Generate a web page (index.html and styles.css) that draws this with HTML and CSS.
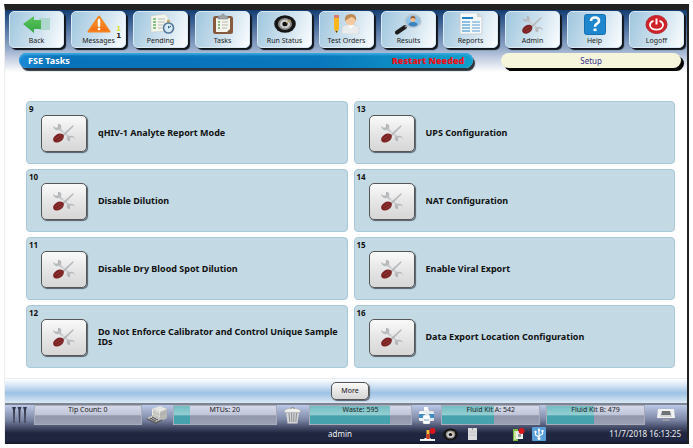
FILE: index.html
```html
<!DOCTYPE html>
<html lang="en">
<head>
<meta charset="utf-8">
<title>FSE Tasks</title>
<link rel="stylesheet" href="styles.css">
</head>
<body>
<svg class="defs" aria-hidden="true">
  <defs>
    <linearGradient id="orange" x1="0" y1="0" x2="0" y2="1"><stop offset="0" stop-color="#ffa640"/><stop offset="1" stop-color="#f26a10"/></linearGradient>
    <linearGradient id="green" x1="0" y1="0" x2="0" y2="1"><stop offset="0" stop-color="#5cc45a"/><stop offset="1" stop-color="#35a844"/></linearGradient>
    <linearGradient id="steel" x1="0" y1="0" x2="1" y2="1"><stop offset="0" stop-color="#a2a6aa"/><stop offset=".5" stop-color="#d0d2d4"/><stop offset="1" stop-color="#a4a8ac"/></linearGradient>
  </defs>
  <symbol id="tools" viewBox="0 0 24 20">
    <path d="M1 3l3 2 2-1V1c3 0 4 2 3 5l8 7c3-1 5 0 6 3l-3-2-2 1v3c-3 0-4-2-3-5L7 7C4 8 2 6 1 3z" fill="url(#steel)"/>
    <path d="M10 12L20 3l2-1-1 2-9 9z" fill="#b6b9bc"/>
    <ellipse cx="6.500" cy="15" rx="5.800" ry="4" transform="rotate(-33 6.500 15)" fill="#7a2222"/>
    <path d="M3 16l6-4M5 18l6-4" stroke="#a04042" stroke-width=".8"/>
  </symbol>
  <symbol id="dialicon" viewBox="0 0 22 18">
    <ellipse cx="11" cy="9" rx="10.800" ry="8.800" fill="#151515"/>
    <ellipse cx="11" cy="9" rx="7" ry="6" fill="#8c8c8a"/>
    <ellipse cx="11" cy="9" rx="5" ry="4.300" fill="#d0d0d0"/>
    <ellipse cx="11" cy="9" rx="2.600" ry="2.300" fill="#111"/>
    <path d="M12 8l5-3" stroke="#c9a04a"/>
  </symbol>
</svg>
<div class="screen">
  <header class="top">
    <nav class="toolbar" aria-label="Main">
      <button class="tool" type="button">
        <svg width="28" height="18" viewBox="0 0 28 18"><path d="M16 3h11v12H16z" fill="#9fd0c0" opacity=".7"/><path d="M0 9L11 1v4h7v9h-7v4z" fill="url(#green)"/></svg>
        <span>Back</span></button>
      <button class="tool" type="button">
        <svg width="24" height="18" viewBox="0 0 24 18"><path d="M12 1.500L22.500 16.500h-21z" fill="url(#orange)" stroke="#f58420" stroke-width="2" stroke-linejoin="round"/><path d="M12 5v6" stroke="#fff" stroke-width="2.400" stroke-linecap="round"/><circle cx="12" cy="14" r="1.300" fill="#fff"/></svg>
        <span>Messages</span>
        <b class="counts"><i>1</i>1</b></button>
      <button class="tool" type="button">
        <svg class="shift" width="25" height="20" viewBox="0 0 25 20"><path d="M1 2l14-2 3 3v14L1 18z" fill="#f4f5ec" stroke="#c9cec8" stroke-width=".6"/><path d="M3 5h3M3 8h3M3 11h3M3 14h3" stroke="#62b562" stroke-width="1.600"/><path d="M8 5h7M8 8h7M8 11h5M8 14h4" stroke="#b9bdb6"/><path d="M17 9V6h3v3" fill="#c6a969"/><circle cx="18.500" cy="14" r="5" fill="#d7eaf7" stroke="#587b9d" stroke-width="1.700"/><path d="M18.500 14l2.500-2M18.500 14v-2" stroke="#36668f"/></svg>
        <span>Pending</span></button>
      <button class="tool" type="button">
        <svg width="22" height="22" viewBox="0 0 22 22"><rect x="1" y="3" width="20" height="18" rx="2.500" fill="#875a3e"/><path d="M4 5h14v11l-3 3H4z" fill="#f4f4ec"/><path d="M6 9h2M6 12h2M6 15h2" stroke="#62a562" stroke-width="1.600"/><path d="M10 9h6M10 12h6M10 15h5" stroke="#b5b8b1"/><path d="M6 6V3h3q2-4 4 0h3v3z" fill="#9fa3a6" stroke="#73777a" stroke-width=".5"/></svg>
        <span>Tasks</span></button>
      <button class="tool" type="button">
        <svg width="22" height="18"><use href="#dialicon"/></svg>
        <span>Run Status</span></button>
      <button class="tool" type="button">
        <svg width="27" height="20" viewBox="0 0 27 20"><path d="M1 3h5v12l-2.500 4L1 15z" fill="#f7b51e"/><path d="M1 1h5v3H1z" fill="#dc7a6a"/><path d="M2.500 17h2l-1 2z" fill="#333"/><path d="M9 20v-5q0-4 5-4h7q5 0 5 4v5z" fill="#e9ebec" stroke="#c8ccd0" stroke-width=".5"/><path d="M15 11l3 4 3-4z" fill="#fff"/><circle cx="17.500" cy="6.500" r="5" fill="#f3c9a0"/><path d="M12 7q-1-7 6-7 6 0 5 7-2-4-5-4-3 2-6 4z" fill="#c08a55"/></svg>
        <span>Test Orders</span></button>
      <button class="tool" type="button">
        <svg width="27" height="21" viewBox="0 0 27 21"><path d="M2 18.500L10 13" stroke="#1c1c1c" stroke-width="4" stroke-linecap="round"/><path d="M10 13l3-2" stroke="#999" stroke-width="2"/><ellipse cx="18" cy="7" rx="7.800" ry="6.300" fill="#8fc3ea" stroke="#bcc6ce" stroke-width="1.600"/><circle cx="18" cy="5.500" r="2.400" fill="#f0b98a"/><path d="M15.500 5q0-3 2.500-3t2.500 3q-3-2-5 0z" fill="#9a5a30"/><path d="M13.500 11q0-3 4.500-3t4.500 3q-4 3-9 0z" fill="#3f83bd"/></svg>
        <span>Results</span></button>
      <button class="tool" type="button">
        <svg width="24" height="22" viewBox="0 0 24 22"><path d="M1 0h17l5 4v17H1z" fill="#f5f7f8" stroke="#c0c6ca" stroke-width=".7"/><path d="M18 0v4h5z" fill="#cdd3d7"/><path d="M3 5h11" stroke="#2084c4" stroke-width="2"/><path d="M3 9h8M3 12h8M3 15h8M3 18h8" stroke="#69aeda" stroke-width="1.400"/><path d="M13 9h8M13 12h8M13 15h8M13 18h8" stroke="#8ebfe0" stroke-width="1.400"/></svg>
        <span>Reports</span></button>
      <button class="tool" type="button">
        <svg width="23" height="19"><use href="#tools"/></svg>
        <span>Admin</span></button>
      <button class="tool" type="button">
        <svg width="22" height="21" viewBox="0 0 22 21"><rect x=".5" y=".5" width="21" height="20" rx="2" fill="#1d86cc" stroke="#1670b0"/><path d="M7 7q0-3.500 4-3.500t4 3.200q0 2-2 3-2 1-2 3" fill="none" stroke="#fff" stroke-width="2.600"/><path d="M9.500 14.500h3v2.600h-3z" fill="#fff"/></svg>
        <span>Help</span></button>
      <button class="tool" type="button">
        <svg width="23" height="19" viewBox="0 0 23 19"><ellipse cx="11.500" cy="9.500" rx="10.500" ry="9" fill="#d02128" stroke="#b3262b"/><path d="M8.500 5.800q-3.500 1.200-3.500 4.200c0 2.800 3 4.700 6.500 4.700s6.500-1.900 6.500-4.700q0-3-3.500-4.200" fill="none" stroke="#fff" stroke-width="1.800"/><path d="M11.500 3.500v6" stroke="#fff" stroke-width="2"/></svg>
        <span>Logoff</span></button>
    </nav>
    <div class="titles">
      <div class="title"><h1>FSE Tasks</h1><strong>Restart Needed</strong></div>
      <div class="mode">Setup</div>
    </div>
  </header>

  <main class="tasks">
    <section class="task"><span class="num">9</span><button id="t9" type="button" aria-labelledby="l9"><svg width="24" height="20"><use href="#tools"/></svg></button><label id="l9" for="t9">qHIV-1 Analyte Report Mode</label></section>
    <section class="task"><span class="num">10</span><button id="t10" type="button" aria-labelledby="l10"><svg width="24" height="20"><use href="#tools"/></svg></button><label id="l10" for="t10">Disable Dilution</label></section>
    <section class="task"><span class="num">11</span><button id="t11" type="button" aria-labelledby="l11"><svg width="24" height="20"><use href="#tools"/></svg></button><label id="l11" for="t11">Disable Dry Blood Spot Dilution</label></section>
    <section class="task"><span class="num">12</span><button id="t12" type="button" aria-labelledby="l12"><svg width="24" height="20"><use href="#tools"/></svg></button><label id="l12" for="t12">Do Not Enforce Calibrator and Control Unique Sample IDs</label></section>
    <section class="task"><span class="num">13</span><button id="t13" type="button" aria-labelledby="l13"><svg width="24" height="20"><use href="#tools"/></svg></button><label id="l13" for="t13">UPS Configuration</label></section>
    <section class="task"><span class="num">14</span><button id="t14" type="button" aria-labelledby="l14"><svg width="24" height="20"><use href="#tools"/></svg></button><label id="l14" for="t14">NAT Configuration</label></section>
    <section class="task"><span class="num">15</span><button id="t15" type="button" aria-labelledby="l15"><svg width="24" height="20"><use href="#tools"/></svg></button><label id="l15" for="t15">Enable Viral Export</label></section>
    <section class="task"><span class="num">16</span><button id="t16" type="button" aria-labelledby="l16"><svg width="24" height="20"><use href="#tools"/></svg></button><label id="l16" for="t16">Data Export Location Configuration</label></section>
  </main>

  <div class="actions"><button class="more" type="button">More</button></div>

  <footer class="status">
    <div class="gauges">
      <svg width="15" height="17" viewBox="0 0 15 17"><path d="M0 0h4l-1 3-.5 13h-1L1 3zM5.500 0h4l-1 3L8 16H7L6.500 3zM11 0h4l-1 3-.5 13h-1L12 3z" fill="#34384a"/></svg>
      <div class="gauge"><span>Tip Count: 0</span></div>
      <svg width="22" height="18" viewBox="0 0 22 18"><path d="M6 3l8-3 7 3v9l-7 3-8-3z" fill="#e6e6e2"/><path d="M14 6v9l7-3V3z" fill="#b7b7b3"/><path d="M8 3v9M10 4v9M12 5v9M7 6l7 3 6-3M7 9l7 3" stroke="#a5a5a2" stroke-width=".6" fill="none"/><path d="M0 13l7-3 10 4-7 4z" fill="#5d5d62"/><path d="M1 12l6-3 9 4-6 3z" fill="#c7c7c5"/><path d="M4 12l6 3M6 11l6 3" stroke="#47474b"/></svg>
      <div class="gauge"><i style="width:16%"></i><span>MTUs: 20</span></div>
      <svg width="17" height="17" viewBox="0 0 17 17"><path d="M2 5h13l-1.500 11.500h-10z" fill="#d4d5d6"/><path d="M5 6l.7 9M7.500 6l.3 9M10 6l-.3 9M12.500 6l-.7 9" stroke="#8c8e93"/><path d="M.5 3q8-4 16 0v2.500H.5z" fill="#eeeeec" stroke="#a4a5a8" stroke-width=".6"/><path d="M6.500 1.500q2-2 4 0" stroke="#888" fill="none"/></svg>
      <div class="gauge"><i style="width:79%"></i><span>Waste: 595</span></div>
      <svg width="15" height="17" viewBox="0 0 15 17"><rect x="5" y="2" width="5" height="8" rx="1" fill="#e9eef2"/><rect x="5" y="0" width="4" height="3" fill="#fff"/><rect x="0" y="4" width="6" height="10" rx="1.500" fill="#f4f7f9"/><rect x="0" y="7" width="6" height="4" fill="#3f8cc2"/><rect x="9" y="4" width="6" height="10" rx="1.500" fill="#e4eaee"/><rect x="10" y="7" width="5" height="4" fill="#3f8cc2"/><rect x="4" y="8" width="7" height="9" rx="1.500" fill="#fff" stroke="#b8c4ce" stroke-width=".5"/><path d="M5 12h5v2H5z" fill="#b9cfdf"/></svg>
      <div class="gauge"><i style="width:53%"></i><span>Fluid Kit A: 542</span></div>
      <div class="gauge last"><i style="width:48%"></i><span>Fluid Kit B: 479</span></div>
      <svg width="18" height="14" viewBox="0 0 18 14"><path d="M1 1h16l1 9H0z" fill="#f0f1f0"/><path d="M5 3h8l1 4H4z" fill="#6f7274"/><path d="M3 8h12" stroke="#bbb"/><path d="M6 11h6l1 2H5z" fill="#999ca4"/></svg>
    </div>
    <div class="info">
      <span class="user">admin</span>
      <div class="icons">
        <svg width="16" height="13" viewBox="0 0 16 13"><path d="M0 11h15v2H0z" fill="#eee"/><path d="M5 10h5l2 2H3z" fill="#fff"/><path d="M6.500 2h3v9h-3z" fill="#f2c23b"/><path d="M6.500 6h3v5h-3z" fill="#d23a24"/><circle cx="12.500" cy="3" r="3" fill="#d9161c"/></svg>
        <svg width="15" height="13"><use href="#dialicon"/></svg>
        <svg class="box" width="9" height="12" viewBox="0 0 9 12"><path d="M0 0h9v12H0z" fill="#dadcdd"/><path d="M1 4h7M1 7h7" stroke="#bfc1c4"/><path d="M4 0h1v2H4z" fill="#999"/></svg>
        <svg class="flag" width="13" height="13" viewBox="0 0 13 13"><path d="M1 1h5v12H1z" fill="#7cba42"/><path d="M4 3h7v8H4z" fill="#ecefe5"/><path d="M6 6h3v3H6z" fill="#9b9f9e"/><path d="M2 3h2v9H2z" fill="#c9e39c"/><circle cx="9.500" cy="3" r="3" fill="#d9161c"/></svg>
        <svg width="14" height="14" viewBox="0 0 14 14"><rect width="14" height="14" rx="1" fill="#5b9fda"/><path d="M7 12V2M7 10L3.500 8V5M7 9l3.500-2V4" stroke="#fff" stroke-width="1.200" fill="none"/><path d="M5.500 3.500L7 1l1.500 2.500z" fill="#fff"/><circle cx="7" cy="11.500" r="1.500" fill="#fff"/><circle cx="3.500" cy="5" r="1.200" fill="#fff"/><path d="M9.500 3h2v2h-2z" fill="#fff"/></svg>
      </div>
      <time datetime="2018-11-07T16:13:25">11/7/2018 16:13:25</time>
    </div>
  </footer>
</div>
</body>
</html>
```
FILE: styles.css
```css
* { box-sizing: border-box; }
body {
  margin: 0;
  padding: 4px;
  min-height: 100vh;
  display: flex;
  background: #fff;
  color: #111;
  font: 8px/10px "Noto Sans", "Open Sans", sans-serif;
}
button { font: inherit; color: inherit; padding: 0; }
.defs { position: absolute; width: 0; height: 0; }
.screen {
  flex: 1;
  display: flex;
  flex-direction: column;
  border-top: 6px solid #222;
  border-right: 2px solid #222;
  border-left: 1px solid #eceef0;
}

.top {
  padding: 1px 3px 4px 4px;
  background: linear-gradient(#123c70, #31588c 14%, #8ea5c7 60%, #c9d3e4 80%, #fff);
}
.toolbar {
  display: grid;
  grid-template-columns: repeat(11, 1fr);
  gap: 7px;
}
.tool {
  position: relative;
  height: 37px;
  display: flex;
  flex-direction: column;
  align-items: center;
  justify-content: flex-end;
  padding-bottom: 2px;
  border: 1px solid #d9e8f2;
  border-radius: 5px;
  background: linear-gradient(110deg, #9fc6de, #cfe2ee 55%, #fafdff);
  box-shadow: 2px 2px 1px #10151c;
  font-size: 7px;
  line-height: 9px;
  color: #222;
  white-space: nowrap;
}
.tool svg { flex: none; margin: auto; }
.tool .shift { margin-left: 16px; }
.counts {
  position: absolute;
  right: 4px;
  top: 14px;
  font: bold 7px/7px "DejaVu Sans", sans-serif;
}
.counts i { display: block; font-style: normal; color: #d6e030; }

.titles {
  display: flex;
  justify-content: space-between;
  margin-top: 5px;
  padding: 0 3px 0 10px;
  gap: 28px;
}
.title, .mode {
  height: 15px;
  border-radius: 8px;
  line-height: 15px;
}
.title {
  flex: 437;
  display: flex;
  justify-content: space-between;
  padding: 0 9px;
  background: linear-gradient(90deg, #1b8ad6, #0872ba 8%, #0a76bc 65%, #10a0ca);
  box-shadow: inset 0 2px 2px #37a7df, 2px 3px 1px #2b333c;
  font-size: 9px;
  font-weight: bold;
}
.title h1 { margin: 0; font-size: 9px; line-height: 15px; color: #fff; }
.title strong { color: #f01018; }
.mode {
  flex: 180;
  background: #f5f5dc;
  box-shadow: 3px 3px 0 #050505;
  text-align: center;
  color: #39308c;
}

.tasks {
  flex: 1;
  display: grid;
  grid-template-rows: repeat(4, 63px);
  grid-template-columns: 1fr 1fr;
  grid-auto-flow: column;
  align-content: end;
  gap: 5px 6px;
  padding: 24px 12px 10px 21px;
  border-bottom: 1px solid #e6edf4;
}
.task {
  display: grid;
  grid-template: 12px 38px / 46px 1fr;
  column-gap: 11px;
  align-items: center;
  padding: 0 3px 0 14px;
  border: 1px solid #a9c9d8;
  border-radius: 4px;
  background: #c3dae4;
  font-size: 9px;
  font-weight: bold;
}
.num { grid-column: 1 / 3; align-self: end; margin-left: -12px; font-size: 8px; }
.task button, .more {
  border: 1px solid #565656;
  border-radius: 5px;
  background: linear-gradient(#fafafa, #e6e6e6 50%, #d6d6d6);
  box-shadow: 1px 1px 1px #55606a;
}
.task button { height: 37px; display: grid; place-items: center; }

.actions {
  display: flex;
  justify-content: center;
  padding: 3px 0 3px 8px;
  background: linear-gradient(#fff, #c8dcf0 35%, #9cc2e4 58%, #dce9f5);
  border-bottom: 2px solid #7d8493;
}
.more { width: 38px; height: 18px; font-size: 7px; }

.status {
  padding: 0 0 1px;
  background: linear-gradient(#bcc8e8, #7c86a4 38%, #4b5370 55%, #20263f 72%, #202641 92%, #14182a);
}
.gauges {
  display: grid;
  grid-template-columns: 29px 108fr 31px 104fr 32px 104fr 29px 99fr 105fr 42px;
  align-items: center;
  justify-items: center;
}
.gauge {
  position: relative;
  justify-self: stretch;
  height: 20px;
  border: 1px solid #a9adba;
  background: linear-gradient(#d5d9ea, #bfc4d7 50%, #9197ad 54%, #9ba0b4);
  text-align: center;
  color: #222;
}
.gauge.last { margin-left: 6px; }
.gauge i {
  position: absolute;
  inset: 0 auto 0 0;
  background: linear-gradient(#74bdc3, #94cfd2 50%, #46a3ad 54%, #46a3ad);
}
.gauge span { position: relative; display: block; line-height: 8px; font-size: 7px; }
.info {
  display: grid;
  grid-template-columns: 348fr 68fr 144fr 124fr;
  align-items: center;
  height: 18px;
  color: #eef0f6;
}
.user { text-align: right; }
.icons { grid-column: 3; display: flex; align-items: center; gap: 7px; }
.box { margin: 0 3px; }
.flag { margin-left: 25px; }
.info time { text-align: right; padding-right: 6px; white-space: nowrap; }
```
